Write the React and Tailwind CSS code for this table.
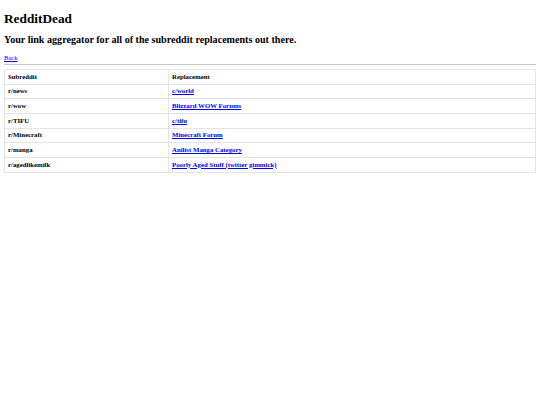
const rows = [
  ["r/news", "c/world"],
  ["r/wow", "Blizzard WOW Forums"],
  ["r/TIFU", "c/tifu"],
  ["r/Minecraft", "Minecraft Forum"],
  ["r/manga", "Anilist Manga Category"],
  ["r/agedlikemilk", "Poorly Aged Stuff (twitter gimmick)"],
];

export default function App() {
  return (
    <div className="min-h-screen bg-white px-1 py-1 text-black font-['Liberation_Serif',serif]">
      <h1 className="mt-[6.5px] text-[13.3px] font-bold leading-[16px]">RedditDead</h1>
      <h2 className="mt-[7.4px] text-[10.1px] font-bold leading-[12px]">
        Your link aggregator for all of the subreddit replacements out there.
      </h2>
      <a href="#" className="mt-[8px] block w-fit text-[6.6px] leading-[7px] text-[#0000ee] underline">
        Back
      </a>
      <hr className="mt-[3px] border-t border-[#c8c8c8]" />
      <table className="mt-[4px] w-full border-collapse text-[6.8px] font-bold">
        <thead>
          <tr>
            <th className="w-[164px] border border-[#e4e4e4] px-[3px] h-[14.7px] text-left">Subreddit</th>
            <th className="border border-[#e4e4e4] px-[3px] text-left">Replacement</th>
          </tr>
        </thead>
        <tbody>
          {rows.map(([sub, rep]) => (
            <tr key={sub}>
              <td className="border border-[#e4e4e4] px-[3px] h-[14.7px]">{sub}</td>
              <td className="border border-[#e4e4e4] px-[3px]">
                <a href="#" className="text-[#0000ee] underline">{rep}</a>
              </td>
            </tr>
          ))}
        </tbody>
      </table>
    </div>
  );
}
